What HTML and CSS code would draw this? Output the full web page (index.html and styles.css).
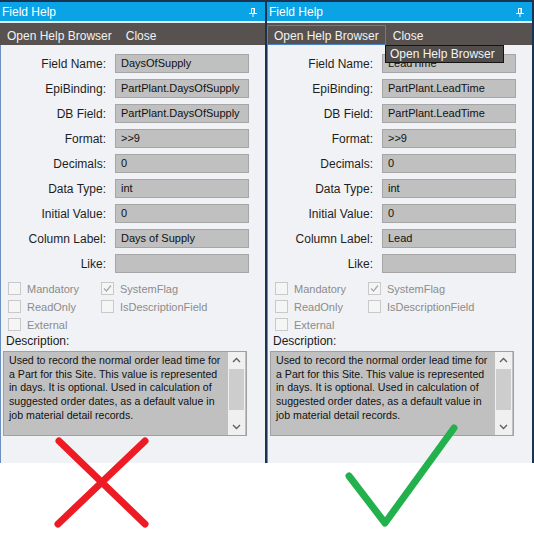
FILE: index.html
```html
<!DOCTYPE html>
<html lang="en">
<head>
  <meta charset="UTF-8" />
  <title>Field Help</title>
  <link rel="stylesheet" href="styles.css">
</head>
<body>
  <div class="screen">
    <div class="panels">

      <div class="panel">
        <div class="titlebar">
          <span>Field Help</span>
          <svg class="pin" width="8" height="9" viewBox="0 0 8 9"><path d="M2.5 0.5h3v5h-3z" fill="none" stroke="#fff"/><rect x="4.5" y="0" width="1.5" height="5.5" fill="#fff"/><path d="M0 5.5h8M4 5.5v3.5" stroke="#fff"/></svg>
        </div>
        <div class="titlebar-gap"></div>
        <div class="toolbar">
          <span class="tool">Open Help Browser</span>
          <span class="tool">Close</span>
        </div>
        <div class="content">
          <div class="fields">
            <span class="field-label">Field Name:</span><span class="field-value">DaysOfSupply</span>
            <span class="field-label">EpiBinding:</span><span class="field-value">PartPlant.DaysOfSupply</span>
            <span class="field-label">DB Field:</span><span class="field-value">PartPlant.DaysOfSupply</span>
            <span class="field-label">Format:</span><span class="field-value">&gt;&gt;9</span>
            <span class="field-label">Decimals:</span><span class="field-value">0</span>
            <span class="field-label">Data Type:</span><span class="field-value">int</span>
            <span class="field-label">Initial Value:</span><span class="field-value">0</span>
            <span class="field-label">Column Label:</span><span class="field-value">Days of Supply</span>
            <span class="field-label">Like:</span><span class="field-value"></span>
          </div>
          <div class="checks">
            <span class="check"><span class="box"></span>Mandatory</span>
            <span class="check"><span class="box"><svg width="11" height="11" viewBox="0 0 11 11"><path d="M2 5.5l2.5 2.5 4.5-5.5" fill="none" stroke="#a8a8a8" stroke-width="1.2"/></svg></span>SystemFlag</span>
            <span class="check"><span class="box"></span>ReadOnly</span>
            <span class="check"><span class="box"></span>IsDescriptionField</span>
            <span class="check"><span class="box"></span>External</span>
          </div>
          <div class="desc-label">Description:</div>
          <div class="desc-box">
            <div class="desc-text">Used to record the normal order lead time for<br>a Part for this Site. This value is represented<br>in days. It is optional. Used in calculation of<br>suggested order dates, as a default value in<br>job material detail records.</div>
            <div class="scroll">
              <svg class="arrow" width="17" height="17" viewBox="0 0 17 17"><path d="M5 10l3.5-3.5 3.5 3.5" fill="none" stroke="#606060" stroke-width="1.4"/></svg>
              <div class="thumb"></div>
              <div class="track"></div>
              <svg class="arrow" width="17" height="17" viewBox="0 0 17 17"><path d="M5 7l3.5 3.5 3.5-3.5" fill="none" stroke="#606060" stroke-width="1.4"/></svg>
            </div>
          </div>
        </div>
      </div>

      <div class="panel">
        <div class="titlebar">
          <span>Field Help</span>
          <svg class="pin" width="8" height="9" viewBox="0 0 8 9"><path d="M2.5 0.5h3v5h-3z" fill="none" stroke="#fff"/><rect x="4.5" y="0" width="1.5" height="5.5" fill="#fff"/><path d="M0 5.5h8M4 5.5v3.5" stroke="#fff"/></svg>
        </div>
        <div class="titlebar-gap"></div>
        <div class="toolbar">
          <span class="tool hover">Open Help Browser</span>
          <span class="tool">Close</span>
        </div>
        <div class="tooltip">Open Help Browser</div>
        <div class="content">
          <div class="fields">
            <span class="field-label">Field Name:</span><span class="field-value">LeadTime</span>
            <span class="field-label">EpiBinding:</span><span class="field-value">PartPlant.LeadTime</span>
            <span class="field-label">DB Field:</span><span class="field-value">PartPlant.LeadTime</span>
            <span class="field-label">Format:</span><span class="field-value">&gt;&gt;9</span>
            <span class="field-label">Decimals:</span><span class="field-value">0</span>
            <span class="field-label">Data Type:</span><span class="field-value">int</span>
            <span class="field-label">Initial Value:</span><span class="field-value">0</span>
            <span class="field-label">Column Label:</span><span class="field-value">Lead</span>
            <span class="field-label">Like:</span><span class="field-value"></span>
          </div>
          <div class="checks">
            <span class="check"><span class="box"></span>Mandatory</span>
            <span class="check"><span class="box"><svg width="11" height="11" viewBox="0 0 11 11"><path d="M2 5.5l2.5 2.5 4.5-5.5" fill="none" stroke="#a8a8a8" stroke-width="1.2"/></svg></span>SystemFlag</span>
            <span class="check"><span class="box"></span>ReadOnly</span>
            <span class="check"><span class="box"></span>IsDescriptionField</span>
            <span class="check"><span class="box"></span>External</span>
          </div>
          <div class="desc-label">Description:</div>
          <div class="desc-box">
            <div class="desc-text">Used to record the normal order lead time for<br>a Part for this Site. This value is represented<br>in days. It is optional. Used in calculation of<br>suggested order dates, as a default value in<br>job material detail records.</div>
            <div class="scroll">
              <svg class="arrow" width="17" height="17" viewBox="0 0 17 17"><path d="M5 10l3.5-3.5 3.5 3.5" fill="none" stroke="#606060" stroke-width="1.4"/></svg>
              <div class="thumb"></div>
              <div class="track"></div>
              <svg class="arrow" width="17" height="17" viewBox="0 0 17 17"><path d="M5 7l3.5 3.5 3.5-3.5" fill="none" stroke="#606060" stroke-width="1.4"/></svg>
            </div>
          </div>
        </div>
      </div>

    </div>

    <svg class="marks" width="534" height="544" viewBox="0 0 534 544">
      <path d="M59 441L145 524M145 441L58 524" stroke="#ed1c24" stroke-width="7" stroke-linecap="round" fill="none"/>
      <path d="M349 476L385 523L454 428" stroke="#22b14c" stroke-width="7" stroke-linecap="round" stroke-linejoin="round" fill="none"/>
    </svg>
  </div>
</body>
</html>
```

FILE: styles.css
```css
body {
  margin: 0;
  background: #fff;
  font-family: "Liberation Sans", Arial, sans-serif;
}

.screen {
  position: relative;
  width: 534px;
  height: 544px;
}

.panels {
  display: flex;
  gap: 2px;
  height: 463px;
  padding: 2px 2px 0 0;
  box-sizing: border-box;
  background: #1a3350;
}

.panel {
  position: relative;
  width: 265px;
  display: flex;
  flex-direction: column;
}

.titlebar {
  height: 19px;
  display: flex;
  align-items: center;
  justify-content: space-between;
  padding: 1px 8px 0 2px;
  box-sizing: border-box;
  background: #0aa3e6;
  color: #fff;
  font-size: 12px;
}

.titlebar-gap {
  height: 2px;
  background: #e4ecf2;
}

.toolbar {
  height: 22px;
  display: flex;
  padding-top: 2px;
  box-sizing: border-box;
  background: #575250;
}

.tool {
  display: flex;
  align-items: center;
  padding: 1px 6px 0;
  border: 1px solid transparent;
  color: #f2f2f2;
  font-size: 12px;
}

.tool.hover {
  border-color: #4683c4;
}

.tooltip {
  position: absolute;
  left: 118px;
  top: 43px;
  width: 119px;
  height: 18px;
  box-sizing: border-box;
  padding-left: 4px;
  border: 1px solid #141414;
  background: #514d4b;
  color: #f4f4f4;
  font-size: 12px;
  line-height: 16px;
}

.content {
  flex: 1;
  padding-top: 9px;
  background: #f1f2f5;
  border-left: 1px solid #6b8fbf;
}

.fields {
  display: grid;
  grid-template-columns: 105px 134px;
  column-gap: 9px;
  row-gap: 6px;
  align-items: center;
}

.field-label {
  text-align: right;
  font-size: 12px;
  color: #1e1e1e;
}

.field-value {
  height: 19px;
  box-sizing: border-box;
  padding-left: 5px;
  border: 1px solid #a6a6a6;
  background: #c0c0c0;
  font-size: 11px;
  line-height: 17px;
  color: #111;
  white-space: nowrap;
  overflow: hidden;
}

.checks {
  display: grid;
  grid-template-columns: 93px auto;
  row-gap: 5px;
  margin-top: 9px;
  padding-left: 7px;
}

.check {
  display: flex;
  align-items: center;
  gap: 6px;
  height: 13px;
  font-size: 11px;
  color: #8c8c8c;
}

.box {
  width: 13px;
  height: 13px;
  box-sizing: border-box;
  display: flex;
  border: 1px solid #c9c9c9;
  background: #f5f5f5;
}

.desc-label {
  margin: 3px 0 0 5px;
  font-size: 12px;
  line-height: 14px;
  color: #1a1a1a;
}

.desc-box {
  display: flex;
  width: 244px;
  height: 85px;
  box-sizing: border-box;
  margin: 3px 0 0 2px;
  border: 1px solid #a0a0a0;
  background: #c0c0c0;
}

.desc-text {
  flex: 1;
  padding: 2px 0 0 5px;
  font-size: 10.6px;
  line-height: 13.7px;
  color: #111;
  white-space: nowrap;
  overflow: hidden;
}

.scroll {
  width: 17px;
  margin-right: 1px;
  display: flex;
  flex-direction: column;
  align-items: center;
  background: #f0f0f0;
}

.thumb {
  width: 15px;
  height: 41px;
  background: #cdcdcd;
}

.track {
  flex: 1;
}

.marks {
  position: absolute;
  left: 0;
  top: 0;
  pointer-events: none;
}
```
